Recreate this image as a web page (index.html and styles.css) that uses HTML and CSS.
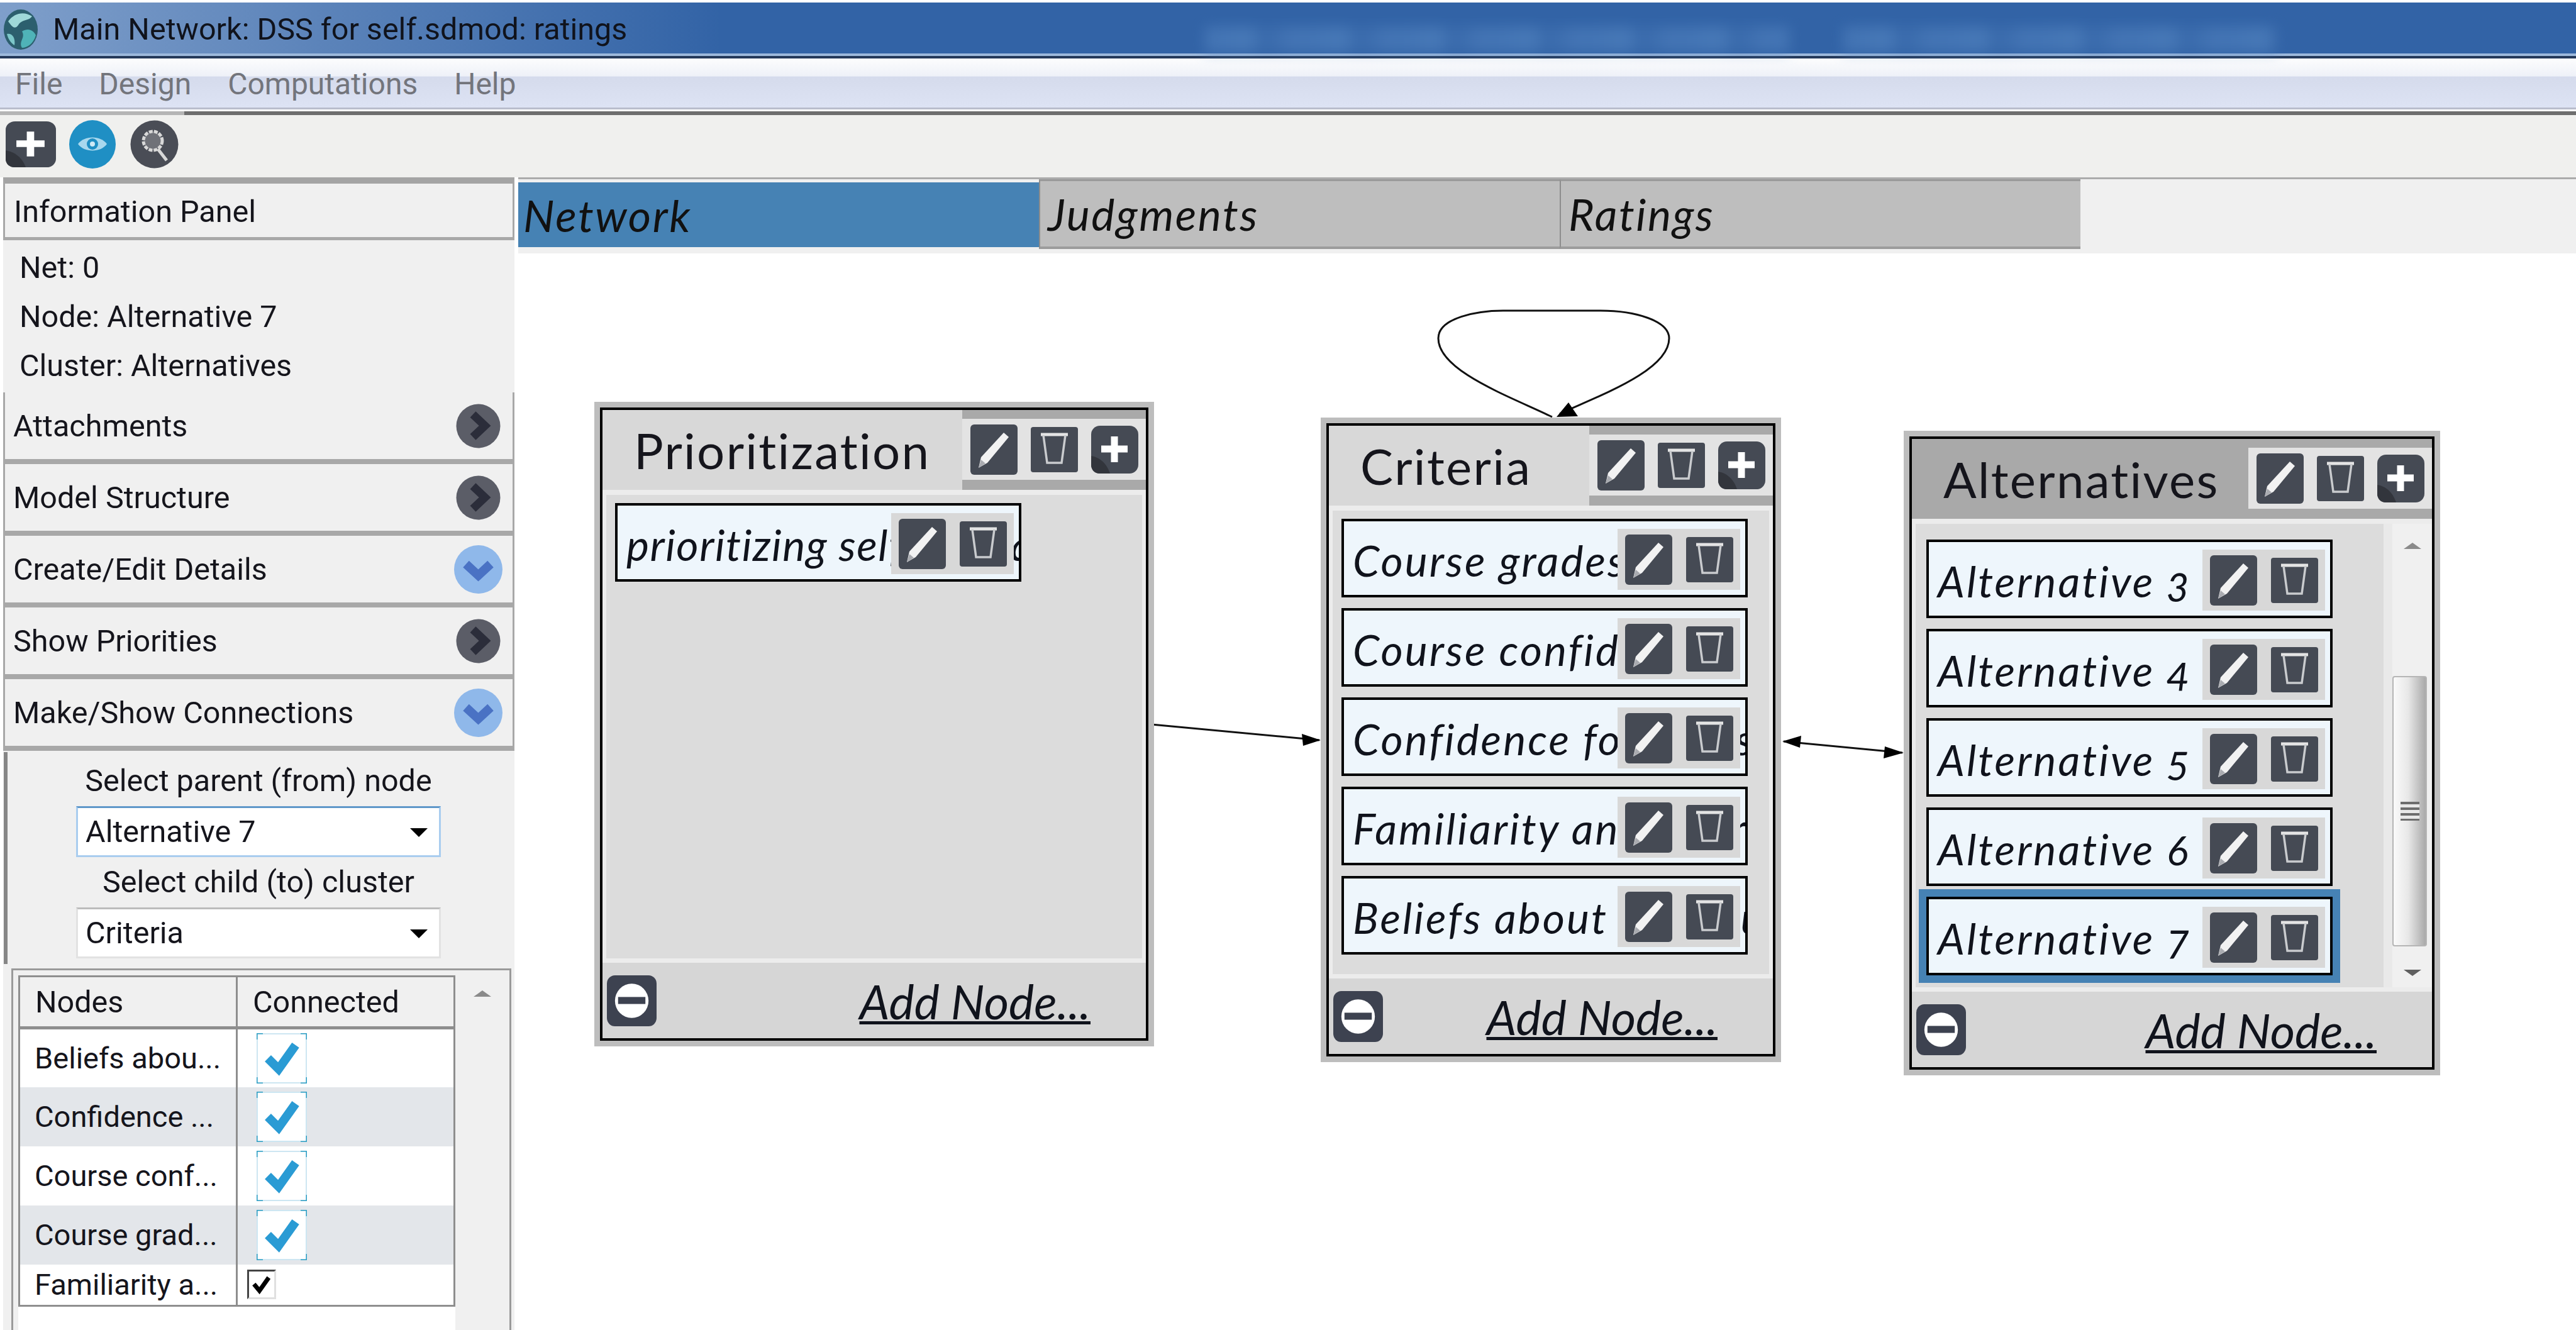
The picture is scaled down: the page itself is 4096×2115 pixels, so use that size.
FILE: index.html
```html
<!DOCTYPE html>
<html lang="en">
<head>
    <meta charset="UTF-8">
    <meta name="viewport" content="width=device-width, initial-scale=1.0">
    <title>Main Network: DSS for self.sdmod: ratings</title>
    <link rel="stylesheet" href="styles.css">
</head>
<body>
    <svg class="icon-defs" width="0" height="0">
        <symbol id="i-pencil" viewBox="0 0 75 80" preserveAspectRatio="none">
            <rect x="0" y="0" width="75" height="80" rx="6" fill="#454a54"/>
            <path d="M53 13 L61 20 L27 61 L13 69 L17 52 Z" fill="#f2f2f2"/>
            <path d="M13 69 L17 56 L24 62 Z" fill="#a9abb0"/>
        </symbol>
        <symbol id="i-trash" viewBox="0 0 75 80" preserveAspectRatio="none">
            <rect x="0" y="4" width="75" height="72" rx="4" fill="#454a54"/>
            <path d="M16 16 H59" stroke="#e4e4e4" stroke-width="5"/>
            <path d="M20 17 L26 61 H49 L55 17" fill="none" stroke="#c9cbce" stroke-width="3.5"/>
        </symbol>
        <symbol id="i-plus" viewBox="0 0 75 80" preserveAspectRatio="none">
            <rect x="0" y="2" width="75" height="76" rx="14" fill="#454a54"/>
            <path d="M0 50 C12 52 24 60 30 78 H14 C5 78 0 72 0 64 Z" fill="#32353c"/>
            <path d="M37 19 V60 M16 39 H58" stroke="#fff" stroke-width="11"/>
        </symbol>
        <symbol id="i-minus" viewBox="0 0 80 80" preserveAspectRatio="none">
            <rect x="0" y="0" width="80" height="80" rx="13" fill="#3d4250"/>
            <circle cx="40" cy="40" r="27" fill="#fff"/>
            <rect x="18" y="34" width="44" height="11" fill="#3d4250"/>
        </symbol>
        <symbol id="i-check" viewBox="0 0 80 80">
            <rect x="1" y="1" width="78" height="78" fill="#fff" stroke="#cde6f2" stroke-width="2"/>
            <path d="M0 10 V0 H10 M70 0 H80 V10 M80 70 V80 H70 M10 80 H0 V70" fill="none" stroke="#2f9fc4" stroke-width="3"/>
            <path d="M18 40 L35 57 L62 19" fill="none" stroke="#2a9bd4" stroke-width="14"/>
        </symbol>
    </svg>

    <div class="titlebar">
        <svg class="app-logo" viewBox="0 0 56 66">
            <ellipse cx="28" cy="33" rx="27" ry="32" fill="#2c5f6e"/>
            <path d="M8 20 C18 6 34 4 46 12 C40 20 30 16 24 26 C18 34 14 28 8 20 Z" fill="#9fd8d8"/>
            <path d="M30 36 C40 30 48 34 52 42 C48 56 38 62 30 62 C24 52 36 46 30 36 Z" fill="#4fb3b8"/>
            <path d="M6 40 C14 38 20 46 18 58 C12 54 8 48 6 40 Z" fill="#7cc7c9"/>
        </svg>
        <span class="title-text">Main Network: DSS for self.sdmod: ratings</span>
        <div class="title-smear title-smear-a"></div>
        <div class="title-smear title-smear-b"></div>
    </div>

    <div class="menubar">
        <span>File</span>
        <span>Design</span>
        <span>Computations</span>
        <span>Help</span>
    </div>

    <div class="toolbar-rule"></div>
    <div class="toolbar">
        <svg class="tool tool-plus"><use href="#i-plus"/></svg>
        <svg class="tool tool-eye" viewBox="0 0 74 77">
            <ellipse cx="37" cy="38.5" rx="37" ry="38.5" fill="#1f8fc4"/>
            <path d="M14 38 C24 24 50 24 60 38 C50 52 24 52 14 38 Z" fill="#a8d8ee"/>
            <circle cx="37" cy="38" r="9" fill="#1f8fc4"/>
            <circle cx="37" cy="38" r="4" fill="#cfeaf6"/>
        </svg>
        <svg class="tool tool-search" viewBox="0 0 77 77">
            <circle cx="38.5" cy="38.5" r="38" fill="#4a4d56"/>
            <circle cx="36" cy="33" r="15" fill="#6f7178" stroke="#d8d8d8" stroke-width="5" stroke-dasharray="6 2"/>
            <path d="M44 46 L58 64" stroke="#d8d8d8" stroke-width="5"/>
        </svg>
    </div>

    <div class="main">
        <aside class="sidebar">
            <div class="info-head">Information Panel</div>
            <div class="info-lines">
                <div>Net: 0</div>
                <div>Node: Alternative 7</div>
                <div>Cluster: Alternatives</div>
            </div>

            <div class="acc-item">
                <span>Attachments</span>
                <svg class="acc-icon" viewBox="0 0 77 77"><circle cx="38.5" cy="38.5" r="35" fill="#5b5d67"/><path d="M30 20 L49 38 L30 56" fill="none" stroke="#2b2d3a" stroke-width="13"/></svg>
            </div>
            <div class="acc-item">
                <span>Model Structure</span>
                <svg class="acc-icon" viewBox="0 0 77 77"><circle cx="38.5" cy="38.5" r="35" fill="#5b5d67"/><path d="M30 20 L49 38 L30 56" fill="none" stroke="#2b2d3a" stroke-width="13"/></svg>
            </div>
            <div class="acc-item">
                <span>Create/Edit Details</span>
                <svg class="acc-icon" viewBox="0 0 77 77"><circle cx="38.5" cy="38.5" r="38.5" fill="#8fb8ea"/><path d="M19 30 L38.5 48 L58 30" fill="none" stroke="#4a72c4" stroke-width="14"/></svg>
            </div>
            <div class="acc-item">
                <span>Show Priorities</span>
                <svg class="acc-icon" viewBox="0 0 77 77"><circle cx="38.5" cy="38.5" r="35" fill="#5b5d67"/><path d="M30 20 L49 38 L30 56" fill="none" stroke="#2b2d3a" stroke-width="13"/></svg>
            </div>
            <div class="acc-item">
                <span>Make/Show Connections</span>
                <svg class="acc-icon" viewBox="0 0 77 77"><circle cx="38.5" cy="38.5" r="38.5" fill="#8fb8ea"/><path d="M19 30 L38.5 48 L58 30" fill="none" stroke="#4a72c4" stroke-width="14"/></svg>
            </div>

            <div class="connect-form">
                <label class="form-label">Select parent (from) node</label>
                <div class="select select-focus">Alternative 7</div>
                <label class="form-label">Select child (to) cluster</label>
                <div class="select">Criteria</div>
            </div>

            <div class="table-panel">
                <div class="table-wrap">
                    <table class="conn-table">
                        <thead>
                            <tr><th>Nodes</th><th>Connected</th></tr>
                        </thead>
                        <tbody>
                            <tr><td>Beliefs abou...</td><td><svg class="check"><use href="#i-check"/></svg></td></tr>
                            <tr><td>Confidence ...</td><td><svg class="check"><use href="#i-check"/></svg></td></tr>
                            <tr><td>Course conf...</td><td><svg class="check"><use href="#i-check"/></svg></td></tr>
                            <tr><td>Course grad...</td><td><svg class="check"><use href="#i-check"/></svg></td></tr>
                            <tr class="row-short">
                                <td>Familiarity a...</td>
                                <td><span class="plain-check">
                                    <svg viewBox="0 0 46 47"><path d="M9 23 L19 35 L36 11" fill="none" stroke="#000" stroke-width="8"/></svg>
                                </span></td>
                            </tr>
                        </tbody>
                    </table>
                </div>
                <div class="table-scroll"><div class="arrow-up"></div></div>
            </div>
        </aside>

        <div class="content">
            <div class="tabs">
                <div class="tab tab-active">Network</div>
                <div class="tab">Judgments</div>
                <div class="tab">Ratings</div>
            </div>

            <div class="canvas">
                <svg class="links" viewBox="824 403 3272 1712">
                    <path d="M2468 663 C2400 630 2287 590 2287 538 C2287 505 2350 494 2390 494 L2545 494 C2600 494 2654 510 2654 538 C2654 590 2540 630 2480 658" fill="none" stroke="#111" stroke-width="3"/>
                    <polygon points="2475,663 2509,662 2494,640" fill="#000"/>
                    <path d="M1831 1152 L2098 1177" stroke="#111" stroke-width="3"/>
                    <polygon points="2100,1177 2070,1167 2072,1186" fill="#000"/>
                    <path d="M2836 1179 L3025 1197" stroke="#111" stroke-width="3"/>
                    <polygon points="2834,1179 2864,1170 2862,1189" fill="#000"/>
                    <polygon points="3027,1197 2997,1187 2995,1206" fill="#000"/>
                </svg>

                <section class="cluster cluster-prio">
                    <div class="cluster-inner">
                        <header class="cluster-head">
                            <h2>Prioritization</h2>
                            <div class="head-tools"><div class="head-tools-bar">
                                <svg class="btn"><use href="#i-pencil"/></svg>
                                <svg class="btn"><use href="#i-trash"/></svg>
                                <svg class="btn"><use href="#i-plus"/></svg>
                            </div></div>
                        </header>
                        <div class="cluster-body">
                            <div class="node-list">
                                <div class="node">
                                    <span class="node-name">prioritizing self-regulated</span>
                                    <div class="node-tools">
                                        <svg class="btn"><use href="#i-pencil"/></svg>
                                        <svg class="btn"><use href="#i-trash"/></svg>
                                    </div>
                                </div>
                            </div>
                        </div>
                        <footer class="cluster-foot">
                            <svg class="btn-minus"><use href="#i-minus"/></svg>
                            <a class="add-node">Add Node...</a>
                        </footer>
                    </div>
                </section>

                <section class="cluster cluster-crit">
                    <div class="cluster-inner">
                        <header class="cluster-head">
                            <h2>Criteria</h2>
                            <div class="head-tools"><div class="head-tools-bar">
                                <svg class="btn"><use href="#i-pencil"/></svg>
                                <svg class="btn"><use href="#i-trash"/></svg>
                                <svg class="btn"><use href="#i-plus"/></svg>
                            </div></div>
                        </header>
                        <div class="cluster-body">
                            <div class="node-list">
                                <div class="node">
                                    <span class="node-name">Course grades</span>
                                    <div class="node-tools"><svg class="btn"><use href="#i-pencil"/></svg><svg class="btn"><use href="#i-trash"/></svg></div>
                                </div>
                                <div class="node">
                                    <span class="node-name">Course confidence</span>
                                    <div class="node-tools"><svg class="btn"><use href="#i-pencil"/></svg><svg class="btn"><use href="#i-trash"/></svg></div>
                                </div>
                                <div class="node">
                                    <span class="node-name">Confidence for course</span>
                                    <div class="node-tools"><svg class="btn"><use href="#i-pencil"/></svg><svg class="btn"><use href="#i-trash"/></svg></div>
                                </div>
                                <div class="node">
                                    <span class="node-name">Familiarity and interest</span>
                                    <div class="node-tools"><svg class="btn"><use href="#i-pencil"/></svg><svg class="btn"><use href="#i-trash"/></svg></div>
                                </div>
                                <div class="node">
                                    <span class="node-name">Beliefs about the course</span>
                                    <div class="node-tools"><svg class="btn"><use href="#i-pencil"/></svg><svg class="btn"><use href="#i-trash"/></svg></div>
                                </div>
                            </div>
                        </div>
                        <footer class="cluster-foot">
                            <svg class="btn-minus"><use href="#i-minus"/></svg>
                            <a class="add-node">Add Node...</a>
                        </footer>
                    </div>
                </section>

                <section class="cluster cluster-alt">
                    <div class="cluster-inner">
                        <header class="cluster-head">
                            <h2>Alternatives</h2>
                            <div class="head-tools"><div class="head-tools-bar">
                                <svg class="btn"><use href="#i-pencil"/></svg>
                                <svg class="btn"><use href="#i-trash"/></svg>
                                <svg class="btn"><use href="#i-plus"/></svg>
                            </div></div>
                        </header>
                        <div class="cluster-body">
                            <div class="node-list">
                                <div class="node">
                                    <span class="node-name">Alternative 3</span>
                                    <div class="node-tools"><svg class="btn"><use href="#i-pencil"/></svg><svg class="btn"><use href="#i-trash"/></svg></div>
                                </div>
                                <div class="node">
                                    <span class="node-name">Alternative 4</span>
                                    <div class="node-tools"><svg class="btn"><use href="#i-pencil"/></svg><svg class="btn"><use href="#i-trash"/></svg></div>
                                </div>
                                <div class="node">
                                    <span class="node-name">Alternative 5</span>
                                    <div class="node-tools"><svg class="btn"><use href="#i-pencil"/></svg><svg class="btn"><use href="#i-trash"/></svg></div>
                                </div>
                                <div class="node">
                                    <span class="node-name">Alternative 6</span>
                                    <div class="node-tools"><svg class="btn"><use href="#i-pencil"/></svg><svg class="btn"><use href="#i-trash"/></svg></div>
                                </div>
                                <div class="node node-selected">
                                    <span class="node-name">Alternative 7</span>
                                    <div class="node-tools"><svg class="btn"><use href="#i-pencil"/></svg><svg class="btn"><use href="#i-trash"/></svg></div>
                                </div>
                            </div>
                            <div class="list-scroll">
                                <div class="arrow-up"></div>
                                <div class="scroll-thumb">
                                    <div class="grip"></div>
                                </div>
                                <div class="arrow-down"></div>
                            </div>
                        </div>
                        <footer class="cluster-foot">
                            <svg class="btn-minus"><use href="#i-minus"/></svg>
                            <a class="add-node">Add Node...</a>
                        </footer>
                    </div>
                </section>
            </div>
        </div>
    </div>
</body>
</html>
```

FILE: styles.css
```css
html, body {
    margin: 0;
    padding: 0;
    height: 100%;
    overflow: hidden;
}

body {
    font-family: Roboto, "Liberation Sans", sans-serif;
    font-size: 48.5px;
    color: #15151c;
    background: #fff;
    display: flex;
    flex-direction: column;
}

.icon-defs {
    position: absolute;
}

/* title bar */
.titlebar {
    position: relative;
    flex: none;
    height: 85px;
    margin-top: 4px;
    display: flex;
    align-items: center;
    border-bottom: 4px solid #24395a;
    box-shadow: inset 0 -4px 0 #9db9dc;
    background:
        linear-gradient(90deg, rgba(190, 208, 232, 0.55) 0, rgba(190, 208, 232, 0.3) 500px, rgba(190, 208, 232, 0) 1150px),
        #3263a6;
}

.app-logo {
    width: 56px;
    height: 66px;
    margin-left: 5px;
}

.title-text {
    margin-left: 23px;
    color: #10131c;
}

.title-smear {
    position: absolute;
    top: 38px;
    height: 42px;
    background: repeating-linear-gradient(90deg, #4f80be 0, #5889c4 70px, #3f70b0 95px, #5585c2 150px);
    opacity: 0.55;
    filter: blur(10px);
}

.title-smear-a {
    left: 1915px;
    width: 930px;
}

.title-smear-b {
    left: 2930px;
    width: 690px;
}

/* menu */
.menubar {
    flex: none;
    height: 76px;
    margin-top: 2px;
    padding-left: 24px;
    display: flex;
    align-items: center;
    gap: 58px;
    font-size: 48px;
    color: #73757c;
    border-bottom: 3px solid #b9bdcc;
    background: linear-gradient(#fbfcfd 0, #eef1f8 34%, #d5dbec 36%, #dde3f4 100%);
}

.toolbar-rule {
    flex: none;
    height: 6px;
    margin-top: 3px;
    background: linear-gradient(90deg, #b5b5b5 293px, #6e6e6e 293px);
}

.toolbar {
    flex: none;
    height: 99px;
    padding: 8px 0 0 9px;
    box-sizing: border-box;
    display: flex;
    align-items: flex-start;
    background: #f0f0ee;
}

.tool {
    height: 77px;
}

.tool-plus {
    width: 80px;
    margin-right: 21px;
}

.tool-eye {
    width: 74px;
    margin-right: 23px;
}

.tool-search {
    width: 77px;
}

/* left panel */
.main {
    flex: 1;
    min-height: 0;
    display: flex;
}

.sidebar {
    flex: none;
    width: 813px;
    margin-left: 5px;
    display: flex;
    flex-direction: column;
    background: #f0f0f0;
    overflow: hidden;
}

.info-head {
    height: 100px;
    box-sizing: border-box;
    padding: 3px 0 0 14px;
    display: flex;
    align-items: center;
    border: 3px solid #a8a8a8;
    border-top: 10px solid #a4a4a4;
    border-bottom-width: 5px;
}

.info-lines {
    padding: 5px 0 3px 26px;
    line-height: 78px;
}

.acc-item {
    height: 114px;
    box-sizing: border-box;
    padding: 0 16px 0 13px;
    display: flex;
    align-items: center;
    justify-content: space-between;
    border: 3px solid #a8a8a8;
    border-bottom-width: 8px;
    border-top: 0;
}

.acc-item:first-of-type {
    border-top: 3px solid #a8a8a8;
}

.acc-icon {
    width: 77px;
    height: 77px;
}

.connect-form {
    flex: none;
    height: 337px;
    box-sizing: border-box;
    padding: 6px 8px 0 0;
    border-left: 6px solid #868686;
    margin-left: 1px;
    margin-top: 2px;
    display: flex;
    flex-direction: column;
    align-items: center;
}

.form-label {
    height: 80px;
    line-height: 80px;
    flex: none;
}

.select {
    position: relative;
    flex: none;
    width: 580px;
    height: 81px;
    line-height: 75px;
    box-sizing: border-box;
    padding-left: 12px;
    background: #fff;
    border: 3px solid #e2e2e2;
    border-top-color: #bcbcbc;
}

.select::after {
    content: '';
    position: absolute;
    right: 18px;
    top: 32px;
    border-left: 14px solid transparent;
    border-right: 14px solid transparent;
    border-top: 14px solid #000;
}

.select-focus {
    border-color: #a9cdef;
    border-top-color: #5f97c9;
}

/* connections table */
.table-panel {
    flex: 1;
    min-height: 0;
    margin: 7px 5px 0 13px;
    padding: 8px 0 0 8px;
    display: flex;
    border: 3px solid #9a9a9a;
    border-bottom: 0;
}

.table-wrap {
    flex: none;
    width: 695px;
    background: #fff;
}

.table-scroll {
    flex: 1;
    display: flex;
    justify-content: center;
    padding-top: 24px;
}

.conn-table {
    width: 695px;
    table-layout: fixed;
    border-collapse: collapse;
}

.conn-table th {
    height: 82px;
    padding: 0 0 0 24px;
    box-sizing: border-box;
    text-align: left;
    font-weight: 400;
    background: #f0f0f0;
    border: 3px solid #8e8e8e;
    border-bottom-width: 5px;
}

.conn-table td {
    height: 94px;
    padding: 0 0 0 23px;
    box-sizing: border-box;
    white-space: nowrap;
    font-size: 47px;
    border-left: 3px solid #8e8e8e;
    border-right: 3px solid #8e8e8e;
}

.conn-table td + td {
    padding-left: 30px;
    line-height: 0;
}

.conn-table tbody tr:nth-child(even) {
    background: #e3e6ea;
}

.conn-table .row-short td {
    height: 66px;
    border-bottom: 3px solid #8e8e8e;
}

.conn-table .row-short td + td {
    padding-left: 15px;
}

.check {
    width: 80px;
    height: 80px;
}

.plain-check {
    display: inline-block;
    width: 46px;
    height: 47px;
    box-sizing: border-box;
    background: #fff;
    border: 3px solid #e0e0e0;
    border-top-color: #444;
    border-left-color: #444;
}

.plain-check svg {
    width: 40px;
    height: 41px;
}

.arrow-up {
    width: 0;
    height: 0;
    border-left: 14px solid transparent;
    border-right: 14px solid transparent;
    border-bottom: 10px solid #8a8a8a;
}

.arrow-down {
    width: 0;
    height: 0;
    margin-top: 37px;
    border-left: 14px solid transparent;
    border-right: 14px solid transparent;
    border-top: 10px solid #5f5f5f;
}

/* tabs */
.content {
    flex: 1;
    min-width: 0;
    margin-left: 6px;
    display: flex;
    flex-direction: column;
}

.tabs {
    flex: none;
    height: 121px;
    box-sizing: border-box;
    display: flex;
    align-items: flex-start;
    border-top: 3px solid #ababab;
    background: #f0f0f0;
}

.tab {
    width: 828px;
    height: 111px;
    box-sizing: border-box;
    padding-left: 12px;
    display: flex;
    align-items: center;
    font-family: Lato, "Open Sans", sans-serif;
    font-style: italic;
    font-size: 70px;
    letter-spacing: 2.5px;
    color: #111;
    background: #bebebe;
    border-top: 3px solid #9a9a9a;
    border-bottom: 4px solid #9c9c9c;
    border-left: 2px solid #8d8d8d;
}

.tab-active {
    padding-left: 8px;
    margin-top: 5px;
    height: 103px;
    background: #4682b4;
    border: 0;
}

/* network diagram */
.canvas {
    position: relative;
    flex: 1;
    min-height: 0;
    font-family: Lato, "Open Sans", sans-serif;
}

.links {
    position: absolute;
    left: 0;
    top: 0;
    width: 3272px;
    height: 1712px;
}

.cluster {
    position: absolute;
    height: 1025px;
    box-sizing: border-box;
    border: 9px solid #bdbdbd;
}

.cluster-prio {
    left: 121px;
    top: 236px;
    width: 890px;
}

.cluster-crit {
    left: 1276px;
    top: 261px;
    width: 732px;
}

.cluster-alt {
    left: 2203px;
    top: 282px;
    width: 853px;
}

.cluster-inner {
    height: 100%;
    box-sizing: border-box;
    border: 4px solid #000;
    display: flex;
    flex-direction: column;
}

.cluster-head {
    flex: none;
    height: 127px;
    display: flex;
    align-items: stretch;
    justify-content: space-between;
    background: #d8d8d8;
}

.cluster-head h2 {
    margin: 0;
    padding-left: 50px;
    font-size: 78px;
    font-weight: 400;
    line-height: 128px;
    letter-spacing: 2.3px;
    color: #15151c;
}

.cluster-alt .cluster-head {
    background: #a9a9a9;
}

.head-tools {
    flex: none;
    width: 292px;
    box-sizing: border-box;
    padding: 14px 0 16px;
    background: #a9a9a9;
}

.head-tools-bar {
    height: 100%;
    display: flex;
    align-items: center;
    justify-content: center;
    gap: 21px;
    background: #e3e3e3;
}

.btn {
    flex: none;
    width: 75px;
    height: 80px;
}

.btn-minus {
    flex: none;
    width: 79px;
    height: 81px;
}

.cluster-body {
    flex: 1;
    min-height: 0;
    display: flex;
    border: solid #ececec;
    border-width: 8px 6px 7px;
    background: #dcdcdc;
}

.cluster-alt .cluster-body {
    border-right: 0;
}

.node-list {
    flex: 1;
    min-width: 0;
    padding: 13px 0 0 14px;
    display: flex;
    flex-direction: column;
    gap: 17px;
}

.cluster-alt .node-list {
    padding: 25px 0 0 17px;
    background: #dcdcdc;
}

.node {
    position: relative;
    flex: none;
    width: 646px;
    height: 125px;
    box-sizing: border-box;
    padding: 5px 0 0 14px;
    display: flex;
    align-items: center;
    overflow: hidden;
    white-space: nowrap;
    border: 4px solid #000;
    background: #eef6fc;
}

.node-selected {
    overflow: visible;
    box-shadow: 0 0 0 12px #4682b4;
}

.node-name {
    font-size: 68px;
    font-style: italic;
    letter-spacing: 3px;
    font-variant-numeric: oldstyle-nums;
    color: #10131c;
}

.cluster-prio .node-name {
    letter-spacing: 1.5px;
}

.node-tools {
    position: absolute;
    right: 8px;
    top: 12px;
    width: 195px;
    height: 97px;
    display: flex;
    align-items: center;
    justify-content: center;
    gap: 22px;
    background: #d8d8d8;
}

.list-scroll {
    flex: none;
    width: 63px;
    margin-left: 14px;
    padding-top: 30px;
    display: flex;
    flex-direction: column;
    align-items: center;
    background: #f0f0f0;
    box-shadow: -14px 0 0 #e9e9e9;
}

.scroll-thumb {
    width: 55px;
    height: 430px;
    margin: 202px 8px 0 0;
    box-sizing: border-box;
    display: flex;
    align-items: center;
    justify-content: center;
    border: 2px solid #b5b5b5;
    border-radius: 4px;
    background: linear-gradient(90deg, #fafafa, #e8e8e8 45%, #a9a9a9);
}

.grip {
    width: 30px;
    height: 30px;
    background: repeating-linear-gradient(#6d6d6d 0, #6d6d6d 4px, #e8e8e8 4px, #e8e8e8 9px);
}

.cluster-foot {
    flex: none;
    height: 120px;
    display: flex;
    align-items: center;
    justify-content: space-between;
    padding: 0 88px 0 7px;
    background: #d6d6d6;
}

.add-node {
    font-size: 76px;
    font-style: italic;
    text-decoration: underline;
    text-decoration-thickness: 5px;
    color: #10131c;
}
```
